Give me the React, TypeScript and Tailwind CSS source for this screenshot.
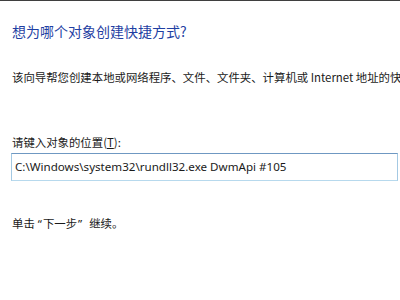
import React from 'react';

const cjk = "font-['Microsoft_YaHei','Noto_Sans_CJK_SC',sans-serif]";
const latin = "font-['Noto_Sans',sans-serif]";

export default function App() {
  return (
    <div className={`w-[400px] h-[300px] overflow-hidden bg-white flex flex-col ${cjk}`}>
      {/* window frame edge */}
      <div className="h-px bg-[#3f3f3f]" />

      <h1 className="mt-[20px] ml-[12px] text-[14px] leading-[20px] font-normal text-[#1f3fa3] whitespace-nowrap">
        想为哪个对象创建快捷方式?
      </h1>

      <p className="mt-[28px] ml-[12px] text-[11.4px] leading-[16px] text-[#1a1a1a] whitespace-nowrap">
        该向导帮您创建本地或网络程序、文件、文件夹、计算机或 Internet 地址的快捷方式。
      </p>

      <label className="mt-[49px] ml-[12px] text-[11.4px] leading-[16px] text-[#1a1a1a] whitespace-nowrap">
        请键入对象的位置(<span className="underline">T</span>):
      </label>

      <div className="mt-[3px] ml-[11px] w-[387px] h-[28px] border border-[#a4c9e3] border-t-[#6f98c2] border-b-[#b7d9ed] bg-white flex items-center pl-[3px]">
        <span className={`text-[11.6px] leading-[16px] text-[#1a1a1a] whitespace-nowrap ${latin}`}>
          C:\Windows\system32\rundll32.exe DwmApi #105
        </span>
      </div>

      <p className="mt-[34px] ml-[12px] text-[11.4px] leading-[16px] text-[#1a1a1a] whitespace-nowrap">
        单击<span className={`${latin} ml-[3px] mr-[1px]`}>“</span>下一步<span className={`${latin} ml-[1px] mr-[7px]`}>”</span>继续。
      </p>
    </div>
  );
}
